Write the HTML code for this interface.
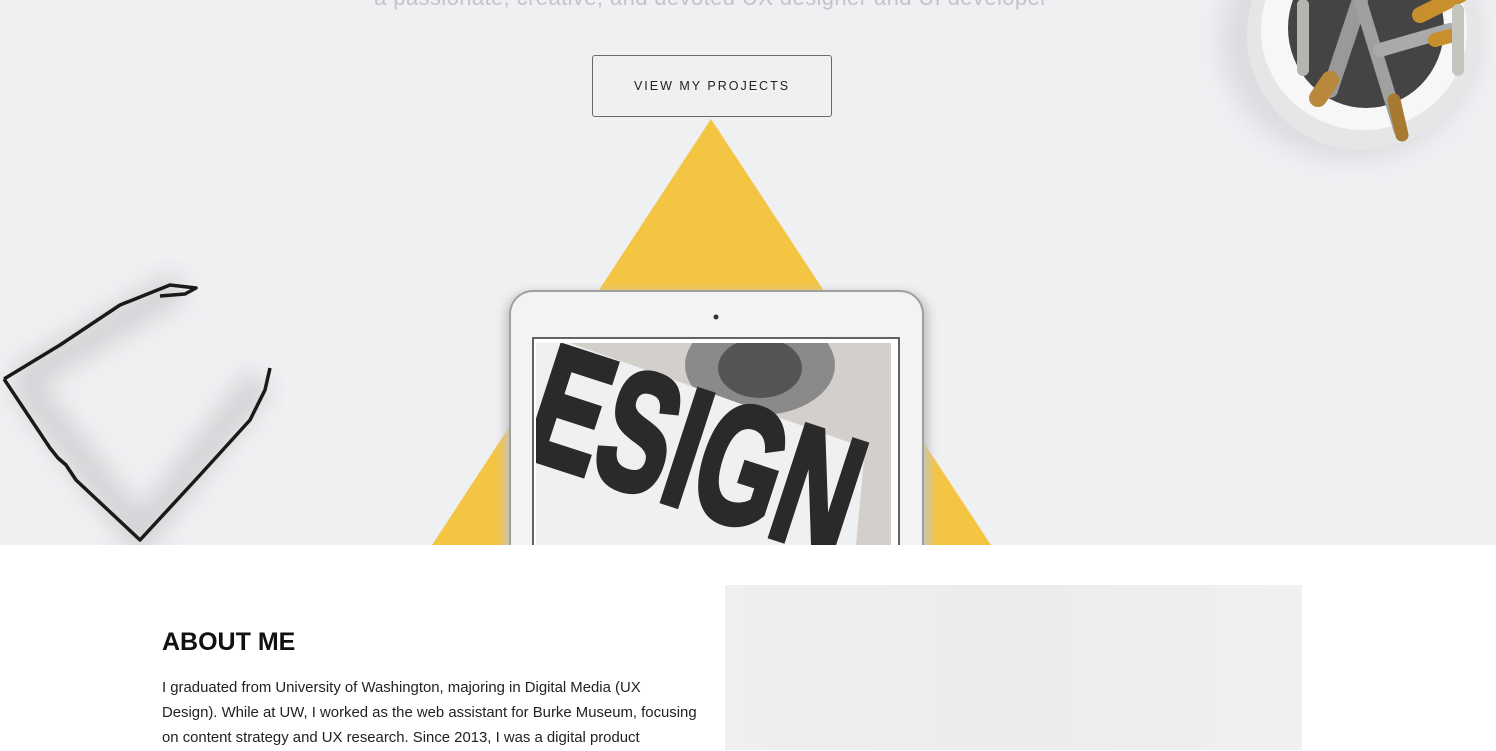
<!DOCTYPE html>
<html><head><meta charset="utf-8"><style>
*{margin:0;padding:0;box-sizing:border-box}
html,body{width:1496px;height:750px;overflow:hidden;background:#fff;font-family:"Liberation Sans",sans-serif}
.hero{position:absolute;left:0;top:0;width:1496px;height:545px;background:#eff0f2;overflow:hidden}
.tag{position:absolute;left:0;width:1422px;top:-15px;text-align:center;font-size:22px;color:#c2c4c7;letter-spacing:0.4px}
.btn{position:absolute;left:592px;top:55px;width:240px;height:62px;border:1px solid #6a6a6a;border-radius:3px;text-align:center;line-height:60px;font-size:12.5px;letter-spacing:2px;color:#222}
h2{position:absolute;left:162px;top:628px;font-size:25px;font-weight:bold;color:#111}
.p{position:absolute;left:162px;top:676px;font-size:14.9px;line-height:25px;color:#222;white-space:nowrap}
.img{position:absolute;left:725px;top:585px;width:577px;height:165px;background:linear-gradient(90deg,#efefef,#ececec 50%,#f0f0f0)}
</style></head><body>
<div class="hero">
<svg width="1496" height="545" style="position:absolute;left:0;top:0">
<defs>
<filter id="b"><feGaussianBlur stdDeviation="12"/></filter>
<filter id="b2"><feGaussianBlur stdDeviation="5"/></filter>
<clipPath id="scr"><rect x="536" y="343" width="355" height="202"/></clipPath>
</defs>
<polygon points="711,119 432,545 991,545" fill="#f4c443"/>
<path d="M20,380 L140,535 L260,380 M20,380 L180,285" stroke="#d2d3d5" stroke-width="30" fill="none" filter="url(#b)"/>
<path d="M4,379 L60,345 L120,305 L170,285 L196,288 L185,294 L160,296 M4,379 L50,448 L58,458 L66,465 L76,480 L140,540 L200,475 L250,420 L265,390 L270,368" stroke="#1a1a1a" stroke-width="3.5" fill="none" stroke-linejoin="round"/>
<ellipse cx="1350" cy="40" rx="130" ry="120" fill="#dcdde0" filter="url(#b)"/>
<ellipse cx="1362" cy="35" rx="115" ry="115" fill="#e6e6e7"/>
<ellipse cx="1364" cy="30" rx="103" ry="100" fill="#f7f7f7"/>
<ellipse cx="1366" cy="28" rx="78" ry="80" fill="#444"/>
<g stroke-linecap="round">
<line x1="1330" y1="90" x2="1360" y2="0" stroke="#999" stroke-width="16"/>
<line x1="1318" y1="98" x2="1330" y2="80" stroke="#b8893a" stroke-width="18"/>
<line x1="1400" y1="130" x2="1360" y2="0" stroke="#a0a0a0" stroke-width="13"/>
<line x1="1402" y1="135" x2="1394" y2="100" stroke="#a67a30" stroke-width="13"/>
<line x1="1380" y1="50" x2="1450" y2="30" stroke="#aaa" stroke-width="14"/>
<line x1="1435" y1="40" x2="1450" y2="36" stroke="#c8902d" stroke-width="14"/>
<line x1="1420" y1="15" x2="1460" y2="-5" stroke="#c8902d" stroke-width="16"/>
<line x1="1303" y1="5" x2="1303" y2="70" stroke="#b5b5b0" stroke-width="12"/>
<line x1="1458" y1="10" x2="1458" y2="70" stroke="#c5c5c0" stroke-width="12"/>
</g>
<rect x="505" y="292" width="424" height="280" rx="26" fill="#c4c4c4" filter="url(#b2)"/>
<rect x="509" y="290" width="415" height="280" rx="24" fill="#a0a0a0"/>
<rect x="511" y="292" width="411" height="280" rx="22" fill="#f3f3f3"/>
<circle cx="716" cy="317" r="2.5" fill="#333"/>
<rect x="533" y="338" width="366" height="220" fill="#fff" stroke="#333" stroke-width="1.5"/>
<g clip-path="url(#scr)">
<rect x="536" y="343" width="355" height="202" fill="#d3d0cb"/>
<ellipse cx="760" cy="365" rx="75" ry="50" fill="#8a8a8a"/>
<ellipse cx="760" cy="368" rx="42" ry="30" fill="#555"/>
<rect x="536" y="343" width="20" height="202" fill="#9a9a9a"/>
<polygon points="536,343 570,343 865,448 856,545 536,545" fill="#eef0f1"/>
<g transform="rotate(18 600 470)">
<text x="518" y="480" transform="translate(518 480) scale(1 1.25) translate(-518 -480)" font-family="Liberation Sans" font-weight="bold" font-size="135" fill="#2a2a2a" textLength="335" lengthAdjust="spacingAndGlyphs" stroke="#2a2a2a" stroke-width="5">ESIGN</text>
</g>
</g>
</svg>
<div class="tag">a passionate, creative, and devoted UX designer and UI developer</div>
<div class="btn">VIEW MY PROJECTS</div>
</div>
<h2>ABOUT ME</h2>
<div class="p">I graduated from University of Washington, majoring in Digital Media (UX<br>Design). While at UW, I worked as the web assistant for Burke Museum, focusing<br>on content strategy and UX research. Since 2013, I was a digital product</div>
<div class="img"></div>
</body></html>
